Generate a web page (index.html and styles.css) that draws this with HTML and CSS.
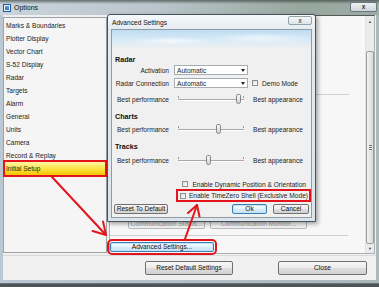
FILE: index.html
```html
<!DOCTYPE html>
<html>
<head>
  <title>Options</title>
  <link rel="stylesheet" href="styles.css">
</head>

<body>
  <div class="window">
    <div class="titlebar">
      <span class="app-icon"></span>
      <span class="title">Options</span>
      <span class="close-btn">x</span>
    </div>

    <div class="client">
      <div class="main">
        <ul class="cat-list">
          <li>Marks &amp; Boundaries</li>
          <li>Plotter Display</li>
          <li>Vector Chart</li>
          <li>S-52 Display</li>
          <li>Radar</li>
          <li>Targets</li>
          <li>Alarm</li>
          <li>General</li>
          <li>Units</li>
          <li>Camera</li>
          <li>Record &amp; Replay</li>
          <li class="selected">Initial Setup</li>
        </ul>

        <div class="pane">
          <div class="pane-content">
            <div class="sep sep-top"></div>
            <div class="comm-row">
              <button class="btn disabled comm-status">Communication Status...</button>
              <button class="btn disabled comm-monitor">Communication Monitor...</button>
            </div>
            <div class="sep sep-bottom"></div>
            <button class="btn btn-default adv-btn">Advanced Settings...</button>
          </div>
          <div class="vscroll">
            <span class="sb-arrow up">&#9650;</span>
            <div class="sb-thumb"><span class="grip"></span></div>
            <span class="sb-arrow down">&#9660;</span>
          </div>
        </div>
      </div>

      <div class="footer">
        <button class="btn reset-all">Reset Default Settings</button>
        <button class="btn close-main">Close</button>
      </div>
    </div>

    <div class="dialog">
      <div class="dlg-title">
        <span>Advanced Settings</span>
        <span class="dlg-close">x</span>
      </div>
      <div class="dlg-body">
        <div class="sky"></div>

        <div class="heading h-radar">Radar</div>
        <div class="row">
          <span class="lbl">Activation</span>
          <div class="select">Automatic<span class="caret"></span></div>
        </div>
        <div class="row row-conn">
          <span class="lbl">Radar Connection</span>
          <div class="select">Automatic<span class="caret"></span></div>
          <span class="chk demo-chk"></span>
          <span>Demo Mode</span>
        </div>
        <div class="row row-slider-1">
          <span class="lbl">Best performance</span>
          <div class="slider">
            <div class="track"></div>
            <div class="knob" style="left: 62px"></div>
          </div>
          <span class="appear">Best appearance</span>
        </div>

        <div class="heading h-charts">Charts</div>
        <div class="row row-slider-2">
          <span class="lbl">Best performance</span>
          <div class="slider">
            <div class="track"></div>
            <div class="knob" style="left: 42px"></div>
          </div>
          <span class="appear">Best appearance</span>
        </div>

        <div class="heading h-tracks">Tracks</div>
        <div class="row row-slider-3">
          <span class="lbl">Best performance</span>
          <div class="slider">
            <div class="track"></div>
            <div class="knob" style="left: 32px"></div>
          </div>
          <span class="appear">Best appearance</span>
        </div>

        <div class="check-row dyn">
          <span class="chk"></span>
          <span>Enable Dynamic Position &amp; Orientation</span>
        </div>
        <div class="check-row tz">
          <span class="chk"></span>
          <span>Enable TimeZero Shell (Exclusive Mode)</span>
        </div>

        <div class="btn-row">
          <button class="btn reset-def">Reset To Default</button>
          <button class="btn btn-default ok-btn">Ok</button>
          <button class="btn cancel-btn">Cancel</button>
        </div>
      </div>
    </div>

    <svg class="arrows" width="379" height="287" viewBox="0 0 379 287">
      <g fill="none" stroke="#e3141b" stroke-width="2" stroke-linecap="round" stroke-linejoin="round">
        <path d="M52 177 L106 235"/>
        <path d="M92.6 231 L106 235 L103 221.4"/>
        <path d="M185 239 L197 205"/>
        <path d="M188 213 L197 205 L199.5 216.5"/>
      </g>
    </svg>
  </div>
</body>
</html>
```

FILE: styles.css
```css
* {
  box-sizing: border-box;
}
body {
  margin: 0;
  width: 379px;
  height: 287px;
  overflow: hidden;
  background: linear-gradient(#8a9294, #4e5456);
  font-family: "Liberation Sans", Arial, sans-serif;
  font-size: 6.6px;
  color: #1c1c1c;
}
.window {
  position: relative;
  width: 379px;
  height: 284px;
  padding: 0 3px 3px;
  display: flex;
  flex-direction: column;
  background: linear-gradient(to right, #b9c8d2, #b0bec6 60%, #a9b8b8);
  border-bottom: 1px solid #66727a;
}
.titlebar {
  height: 15px;
  margin: 0 -3px;
  padding: 0 2px 0 3px;
  display: flex;
  align-items: center;
  background:
    linear-gradient(rgba(58, 68, 64, 0.7), rgba(58, 68, 64, 0) 4px),
    linear-gradient(to right, #c9d4db, #bac6cc 40%, #96a79e 80%, #9cada6);
}
.app-icon {
  width: 8px;
  height: 8px;
  margin-right: 3px;
  border: 1px solid #1f5b9e;
  background: linear-gradient(#6fa6dc, #2a6cb5);
  box-shadow: inset 0 0 0 1px #e6f0fa;
}
.title {
  color: #111;
  font-size: 7px;
}
.close-btn {
  margin-left: auto;
  align-self: flex-start;
  margin-top: 2px;
  width: 27px;
  height: 10px;
  border: 1px solid #6b7880;
  border-radius: 2px;
  background: linear-gradient(#eef2f4, #cdd6db);
  text-align: center;
  line-height: 8px;
  font-weight: bold;
  color: #333;
}
.client {
  flex: 1;
  background: #f0f0f0;
  display: flex;
  flex-direction: column;
}
.main {
  flex: 1;
  display: flex;
  gap: 2px;
}
.cat-list {
  width: 104px;
  margin: 2px 0 2px 0;
  padding: 1px;
  list-style: none;
  border: 1px solid #9ea3a8;
  background: #f5f5f5;
}
.cat-list li {
  height: 13px;
  line-height: 13px;
  padding-left: 1px;
  white-space: nowrap;
}
.cat-list li.selected {
  background: linear-gradient(#fff7a8, #fde545 50%, #f6c400);
  outline: 2px solid #e3141b;
}
.pane {
  flex: 1;
  margin: 0 1px 1px 0;
  display: flex;
  background: #f7f7f7;
  border: 1px solid #aab0b5;
  border-top-color: #55595c;
}
.pane-content {
  flex: 1;
  display: flex;
  flex-direction: column;
  align-items: flex-start;
}
.sep {
  height: 1px;
  background: #cfcfcf;
}
.sep-top {
  width: 236px;
  margin: 78px 0 0 3px;
}
.comm-row {
  display: flex;
  gap: 5px;
  margin-top: 124px;
  padding-left: 18px;
}
.comm-status {
  width: 77px;
}
.comm-monitor {
  width: 97px;
}
.sep-bottom {
  width: 238px;
  margin: 6px 0 0 0;
}
.adv-btn {
  width: 104px;
  margin-top: 6px;
  outline: 2px solid #e3141b;
  outline-offset: 1px;
}
.vscroll {
  width: 9px;
  display: flex;
  flex-direction: column;
  background: #ebebeb;
  border-left: 1px solid #e2e2e2;
}
.sb-arrow {
  height: 11px;
  line-height: 11px;
  text-align: center;
  font-size: 4px;
  color: #444;
}
.sb-arrow.down {
  height: 9px;
  line-height: 9px;
}
.sb-thumb {
  flex: 1;
  margin-top: 24px;
  border: 1px solid #9c9c9c;
  border-radius: 2px;
  background: linear-gradient(to right, #f3f3f3, #dadada);
  display: flex;
  align-items: center;
  justify-content: center;
}
.grip {
  width: 3px;
  height: 5px;
  background: repeating-linear-gradient(#777 0 1px, transparent 1px 2px);
}
.footer {
  height: 25px;
  border-top: 1px solid #dadada;
  display: flex;
  justify-content: flex-end;
  align-items: flex-start;
  gap: 45px;
  padding: 5px 9px 0 0;
}
.btn {
  font: inherit;
  height: 10px;
  padding: 0;
  border: 1px solid #707070;
  border-radius: 2px;
  background: linear-gradient(#f6f6f6, #ececec 50%, #dedede 51%, #d2d2d2);
  color: #111;
  line-height: 8px;
  text-align: center;
  white-space: nowrap;
}
.btn.disabled {
  color: #a3a3a3;
  border-color: #b5b9bc;
  background: #f3f3f3;
}
.btn-default {
  border-color: #3c7fb1;
  background: linear-gradient(#f4fafe, #e6f3fc 50%, #d7ebf9 51%, #c8e3f6);
  box-shadow: inset 0 0 0 1px #bfe3f8;
}
.footer .btn {
  height: 14px;
  line-height: 12px;
}
.reset-all {
  width: 88px;
}
.close-main {
  width: 89px;
}

.dialog {
  position: absolute;
  left: 107px;
  top: 14px;
  width: 209px;
  height: 208px;
  padding: 0 3px 3px;
  display: flex;
  flex-direction: column;
  border: 1px solid #46535c;
  border-radius: 3px 3px 0 0;
  background: linear-gradient(#f6f9fb, #e4ecf1 14px, #dbe4ea);
  box-shadow: 2px 2px 4px rgba(0, 0, 0, 0.35);
}
.dlg-title {
  height: 14px;
  padding-left: 1px;
  display: flex;
  align-items: center;
  color: #111;
}
.dlg-close {
  margin-left: auto;
  align-self: flex-start;
  margin-top: 1px;
  width: 24px;
  height: 9px;
  border: 1px solid #95a2ab;
  border-radius: 2px;
  background: linear-gradient(#f6f8fa, #dee5ea);
  text-align: center;
  line-height: 7px;
  color: #666;
  font-weight: bold;
}
.dlg-body {
  flex: 1;
  display: flex;
  flex-direction: column;
  border: 1px solid #8f9ca5;
  background: #f0f0f0;
  overflow: hidden;
}
.sky {
  height: 19px;
  flex: none;
  background:
    radial-gradient(ellipse 40px 4px at 60px 11px, rgba(255, 255, 255, 0.7), rgba(255, 255, 255, 0)),
    radial-gradient(ellipse 50px 5px at 150px 8px, rgba(255, 255, 255, 0.6), rgba(255, 255, 255, 0)),
    linear-gradient(#bfdcf1, #dcecf8 60%, #f0f0f0);
}
.heading {
  height: 9px;
  line-height: 9px;
  padding-left: 3px;
  font-weight: bold;
  font-size: 7.2px;
  color: #111;
}
.h-radar {
  margin-top: 6px;
}
.h-charts,
.h-tracks {
  margin-top: 7px;
}
.row {
  height: 12px;
  flex: none;
  display: flex;
  align-items: center;
}
.row-conn {
  margin-top: 1px;
}
.row-slider-1 {
  margin-top: 4px;
}
.row-slider-2 {
  margin-top: 2px;
}
.row-slider-3 {
  margin-top: 3px;
}
.lbl {
  width: 57px;
  margin-right: 5px;
  text-align: right;
  white-space: nowrap;
}
.select {
  width: 74px;
  height: 10px;
  padding-left: 2px;
  display: flex;
  align-items: center;
  border: 1px solid #a5acb2;
  background: #fff;
}
.caret {
  margin-left: auto;
  margin-right: 2px;
  border-left: 2px solid transparent;
  border-right: 2px solid transparent;
  border-top: 3px solid #222;
}
.chk {
  flex: none;
  width: 6px;
  height: 6px;
  border: 1px solid #8e8f8f;
  background: linear-gradient(135deg, #dcdcdc, #fff);
}
.demo-chk {
  margin: 0 4px 0 4px;
}
.slider {
  position: relative;
  width: 74px;
  height: 12px;
}
.track {
  position: absolute;
  left: 4px;
  right: 4px;
  top: 6px;
  height: 2px;
  border-top: 1px solid #a8a8a8;
  border-bottom: 1px solid #fff;
}
.track::before,
.track::after {
  content: "";
  position: absolute;
  top: -4px;
  width: 1px;
  height: 2px;
  background: #999;
}
.track::before {
  left: 0;
}
.track::after {
  right: 0;
}
.knob {
  position: absolute;
  top: 1px;
  width: 5px;
  height: 10px;
  border: 1px solid #858585;
  border-radius: 2px 2px 3px 3px;
  background: linear-gradient(#f7f7f7, #d6d6d6);
}
.appear {
  margin-left: 5px;
  white-space: nowrap;
}
.check-row {
  align-self: flex-end;
  display: flex;
  align-items: center;
  gap: 4px;
  white-space: nowrap;
}
.dyn {
  height: 10px;
  margin-top: 13px;
  margin-right: 5px;
}
.tz {
  height: 13px;
  gap: 3px;
  padding: 0 1px 0 2px;
  border: 2px solid #e3141b;
}
.btn-row {
  margin-top: 2px;
  padding: 0 2px;
  display: flex;
  gap: 6px;
}
.reset-def {
  width: 54px;
  margin-right: auto;
}
.ok-btn {
  width: 35px;
}
.cancel-btn {
  width: 36px;
}
.arrows {
  position: absolute;
  left: 0;
  top: 0;
  pointer-events: none;
}
```
